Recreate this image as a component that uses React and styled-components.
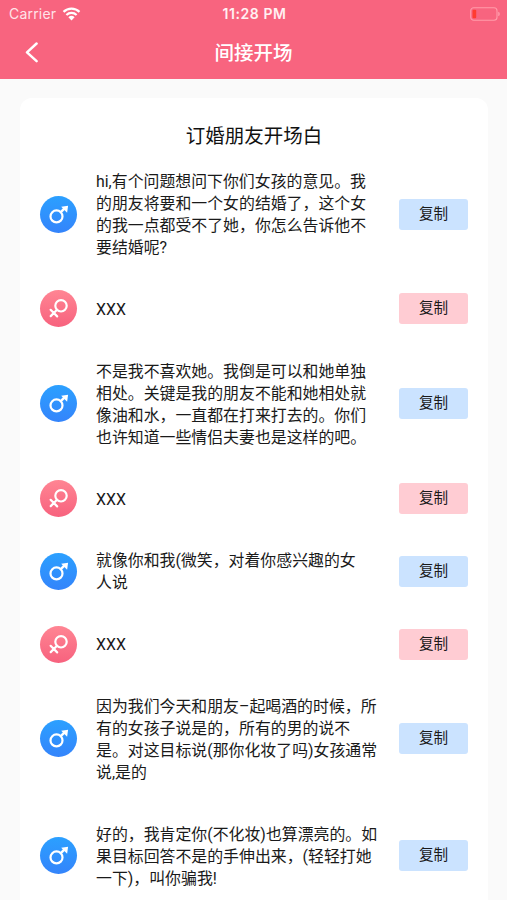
import React from 'react';
import styled, { createGlobalStyle } from 'styled-components';

const GlobalStyle = createGlobalStyle`
  * {
    box-sizing: border-box;
  }

  body {
    margin: 0;
    height: 900px;
    overflow: hidden;
    background: #fafafa;
    color: #1a1a1a;
    font-family: Inter, 'Noto Sans CJK SC', sans-serif;
  }
`;

const Screen = styled.div`
  height: 900px;
  overflow: hidden;
`;

const Header = styled.header`
  height: 79px;
  background: #f8647f;
  color: #fff;
`;

const StatusBar = styled.div`
  height: 27px;
  padding: 0 6px 0 9px;
  display: grid;
  grid-template-columns: 1fr auto 1fr;
  align-items: center;
`;

const Carrier = styled.div`
  display: flex;
  align-items: center;
  gap: 6px;
  font-size: 14px;
  letter-spacing: 0.2px;
  color: #ffe3e8;
`;

const Clock = styled.div`
  margin-right: 1px;
  font-size: 14px;
  font-weight: 600;
  letter-spacing: 0.55px;
  color: #fff0f2;
`;

const BatteryIcon = styled.svg`
  justify-self: end;
`;

const NavBar = styled.div`
  height: 52px;
  padding: 0 24px;
  display: grid;
  grid-template-columns: 1fr auto 1fr;
  align-items: center;
`;

const BackButton = styled.button`
  width: 15px;
  height: 22px;
  padding: 0;
  border: 0;
  background: none;
  display: flex;
`;

const NavTitle = styled.h1`
  margin: 0;
  font-size: 19.5px;
  font-weight: 500;
  line-height: 26px;
`;

const Card = styled.main`
  margin: 18.5px 19px 0 20px;
  padding: 22px 20px 0;
  height: 840px;
  border-radius: 12px;
  background: #fff;
`;

const CardTitle = styled.h2`
  margin: 0 0 -1.4px;
  font-size: 19.5px;
  font-weight: 400;
  line-height: 32px;
  text-align: center;
  color: #111;
`;

const Message = styled.div`
  padding: 19.87px 0;
  display: flex;
  align-items: center;
`;

const Avatar = styled.div`
  width: 37px;
  height: 37px;
  margin: -8px 19px -8px 0;
  flex: none;
  border-radius: 50%;
  background: ${({ $female }) =>
    $female
      ? 'linear-gradient(#ff8593, #f7627e)'
      : 'linear-gradient(#2ba0ff, #3484fb)'};
`;

const MessageText = styled.div`
  flex: 1;
  margin: 1px 0 -1px;
  font-family: Roboto, 'Noto Sans CJK SC', sans-serif;
  font-size: 15.9px;
  line-height: 22.04px;
  white-space: pre;
`;

const CopyButton = styled.button`
  width: 69px;
  height: 31px;
  margin: -5px 0;
  padding: 0;
  flex: none;
  border: 0;
  border-radius: 3px;
  background: ${({ $female }) => ($female ? '#ffccd3' : '#cbe3ff')};
  color: #1a1a1a;
  font-family: inherit;
  font-size: 14.6px;
  line-height: 31px;
`;

const messages = [
  {
    text: 'hi,有个问题想问下你们女孩的意见。我\n的朋友将要和一个女的结婚了，这个女\n的我一点都受不了她，你怎么告诉他不\n要结婚呢?',
  },
  { female: true, text: 'XXX' },
  {
    text: '不是我不喜欢她。我倒是可以和她单独\n相处。关键是我的朋友不能和她相处就\n像油和水，一直都在打来打去的。你们\n也许知道一些情侣夫妻也是这样的吧。',
  },
  { female: true, text: 'XXX' },
  { text: '就像你和我(微笑，对着你感兴趣的女\n人说' },
  { female: true, text: 'XXX' },
  {
    text: '因为我们今天和朋友–起喝酒的时候，所\n有的女孩子说是的，所有的男的说不\n是。对这目标说(那你化妆了吗)女孩通常\n说,是的',
  },
  {
    text: '好的，我肯定你(不化妆)也算漂亮的。如\n果目标回答不是的手伸出来，(轻轻打她\n一下)，叫你骗我!',
  },
];

const MaleIcon = () => (
  <svg width="37" height="37" viewBox="0 0 37 37" fill="none">
    <circle cx="16.5" cy="20.4" r="6" stroke="#fff" strokeWidth="2.2" />
    <path d="M20.8 16.1L25 11.9" stroke="#fff" strokeWidth="2.4" />
    <path d="M21.2 10.8l6.9-1-1 6.9z" fill="#fff" />
  </svg>
);

const FemaleIcon = () => (
  <svg width="37" height="37" viewBox="0 0 37 37" fill="none">
    <g stroke="#fff" strokeWidth="2.2" strokeLinecap="round">
      <circle cx="21" cy="15.8" r="5.7" />
      <path d="M17 19.8L10.7 26.1M10.6 19.8l6.6 6.6" />
    </g>
  </svg>
);

const App = () => (
  <Screen>
    <GlobalStyle />
    <Header>
      <StatusBar>
        <Carrier>
          Carrier
          <svg width="19" height="14" viewBox="0 0 18 14" fill="none">
            <path
              d="M1 4.9a11.6 11.6 0 0 1 16 0M3.9 8a7.4 7.4 0 0 1 10.2 0"
              stroke="#fff"
              strokeWidth="2.2"
            />
            <path d="M5.9 10.2a4.5 4.5 0 0 1 6.2 0L9 13.4z" fill="#fff" />
          </svg>
        </Carrier>
        <Clock>11:28 PM</Clock>
        <BatteryIcon width="31" height="14" viewBox="0 0 31 14" fill="none">
          <rect
            x="0.7"
            y="0.8"
            width="26.3"
            height="12.4"
            rx="3"
            stroke="#ff9cab"
            strokeWidth="1.1"
          />
          <rect x="2.5" y="2.7" width="3.7" height="8.6" rx="1" fill="#ff3b30" />
          <path d="M28.2 4.8v4.4a2.3 2.3 0 0 0 0-4.4z" fill="#ff9cab" />
        </BatteryIcon>
      </StatusBar>
      <NavBar>
        <BackButton aria-label="返回">
          <svg width="15" height="22" viewBox="0 0 15 22" fill="none">
            <path
              d="M12.6 1.5L3 10.3l9.6 8.8"
              stroke="#fff"
              strokeWidth="2.5"
              strokeLinecap="round"
              strokeLinejoin="round"
            />
          </svg>
        </BackButton>
        <NavTitle>间接开场</NavTitle>
      </NavBar>
    </Header>
    <Card>
      <CardTitle>订婚朋友开场白</CardTitle>
      {messages.map(({ female, text }, index) => (
        <Message key={index}>
          <Avatar $female={female}>
            {female ? <FemaleIcon /> : <MaleIcon />}
          </Avatar>
          <MessageText>{text}</MessageText>
          <CopyButton $female={female}>复制</CopyButton>
        </Message>
      ))}
    </Card>
  </Screen>
);

export default App;
